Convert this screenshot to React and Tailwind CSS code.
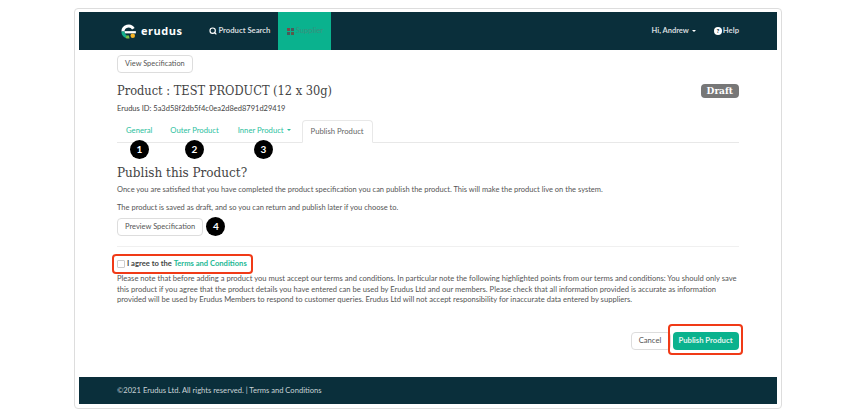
import React from 'react';
import { Search } from 'lucide-react';

const Step = ({ n, className = '' }) => (
  <span className={`flex h-[19px] w-[19px] items-center justify-center rounded-full bg-black text-[10px] font-bold text-white ${className}`}>
    {n}
  </span>
);

const Caret = ({ className = '' }) => (
  <span className={`inline-block border-x-[2.5px] border-t-[2.5px] border-x-transparent ${className}`} />
);

const Logo = () => (
  <svg width="17" height="17" viewBox="0 0 18 18" className="mr-[4px]">
    <path d="M1.5 9a7.5 7.5 0 0 1 14-3.7l-2.7 1.5A4.4 4.4 0 0 0 4.7 9z" fill="#fff" />
    <path d="M4.7 8.6h12.1V11H4.7z" fill="#fff" />
    <path d="M1.5 9h3.2a4.4 4.4 0 0 0 2.4 3.9l-1.3 2.9A7.5 7.5 0 0 1 1.5 9z" fill="#14b08c" />
    <path d="M5.8 15.8l1.3-2.9c.8.4 1.6.5 2.4.4l.6 3.1a7.5 7.5 0 0 1-4.3-.6z" fill="#7cc242" />
    <circle cx="13.5" cy="13.6" r="2.4" fill="#f5b324" />
  </svg>
);

const App = () => {
  return (
    <div className="h-[412px] w-[858px] overflow-hidden bg-white pl-[74px] pt-2 font-['Lato',sans-serif] text-[#555]">
      <div className="flex h-[401px] w-[708px] flex-col rounded border border-[#ddd] px-1 pb-1 pt-[3px]">
        {/* Nav */}
        <div className="flex h-[38px] shrink-0 items-center bg-[#0a2f3b] pl-[41px] pr-[38px] text-[7.7px] text-[#d5dcdf]">
          <Logo />
          <span className="font-['Open_Sans',sans-serif] text-[11px] font-bold tracking-[0.5px] text-white">erudus</span>
          <span className="ml-[27px] flex items-center gap-[1px] font-bold">
            <Search size={8} strokeWidth={3.5} className="text-white" />
            Product Search
          </span>
          <span className="ml-2 flex h-full w-[53px] items-center justify-center gap-[2px] bg-[#0ab28e] text-[#3a8f7d]">
            <span className="grid h-[7px] w-[7px] grid-cols-2 gap-px">
              <span className="bg-[#7a4a4a]" />
              <span className="bg-[#4a5a5a]" />
              <span className="bg-[#4a5a5a]" />
              <span className="bg-[#5a5a4a]" />
            </span>
            Supplier
          </span>
          <span className="ml-auto flex items-center gap-[3px] text-[7.5px] font-bold">
            Hi, Andrew <Caret className="border-t-white" />
          </span>
          <span className="ml-[18px] flex items-center gap-[1px] font-bold">
            <span className="flex h-[8px] w-[8px] items-center justify-center rounded-full bg-white text-[6px] font-black leading-none text-[#0a2f3b]">?</span>
            Help
          </span>
        </div>

        {/* Content */}
        <div className="flex flex-1 flex-col px-[38px]">
          <div className="mt-[5px] flex">
            <button className="h-[18px] rounded-sm border border-[#ddd] bg-white px-[7px] text-[7.4px] leading-none text-[#555]">View Specification</button>
          </div>
          <div className="mt-[7px] flex items-start justify-between">
            <h1 className="font-['DejaVu_Serif',serif] text-[12.7px] font-stretch-condensed leading-[22px] text-[#444]">Product : TEST PRODUCT (12 x 30g)</h1>
            <span className="mt-[4px] rounded-sm bg-[#777] px-[6px] py-[1px] font-['DejaVu_Serif',serif] text-[9px] font-bold leading-[12px] text-white">Draft</span>
          </div>
          <p className="mt-[2px] text-[7.5px] leading-[10px] text-[#444]">Erudus ID: 5a3d58f2db5f4c0ea2d8ed8791d29419</p>

          {/* Tabs */}
          <div className="mt-[6px] flex h-[23px] items-end border-b border-[#e8e8e8] text-[7.7px] text-[#2cc09e]">
            <span className="ml-[9px] h-[19px] leading-[14px]">General</span>
            <span className="ml-[18px] h-[19px] leading-[14px]">Outer Product</span>
            <span className="ml-[19px] flex h-[19px] items-start gap-[3px] leading-[14px]">
              Inner Product <Caret className="mt-[6px] border-t-[#2cc09e]" />
            </span>
            <span className="relative top-px ml-[11px] h-[23px] rounded-t-sm border border-b-white border-[#e8e8e8] bg-white px-2 leading-[20px] text-[#666]">Publish Product</span>
          </div>
          <div className="relative -mt-[3px] flex h-[19px]">
            <Step n={1} className="ml-[13px]" />
            <Step n={2} className="ml-[36px]" />
            <Step n={3} className="ml-[50px]" />
          </div>

          <h2 className="mt-[4px] font-['DejaVu_Serif',serif] text-[13.4px] font-stretch-condensed leading-[20px] text-[#444]">Publish this Product?</h2>
          <p className="mt-[1px] text-[7.5px] leading-[11px]">Once you are satisfied that you have completed the product specification you can publish the product. This will make the product live on the system.</p>
          <p className="mt-[7px] text-[7.5px] leading-[11px]">The product is saved as draft, and so you can return and publish later if you choose to.</p>
          <div className="mt-[4px] flex items-center">
            <button className="h-[18px] rounded-sm border border-[#ddd] bg-white px-[7px] text-[7.5px] leading-none text-[#555]">Preview Specification</button>
            <Step n={4} className="ml-[3px]" />
          </div>
          <div className="mt-[10px] border-t border-[#f0f0f0]" />

          {/* Terms */}
          <div className="-ml-[5px] mt-[7px] flex h-[20px] w-[141px] items-center rounded-sm border-2 border-[#f03a17] pl-[3px] text-[7.6px] font-bold text-[#444]">
            <span className="mr-[2px] h-2 w-2 rounded-[1px] border border-[#ccc] bg-white" />
            I agree to the&nbsp;<span className="text-[#1db894]">Terms and Conditions</span>
          </div>
          <p className="mt-[-1px] text-[7.6px] leading-[10.7px] text-[#555]">
            Please note that before adding a product you must accept our terms and conditions. In particular note the following highlighted points from our terms and conditions: You should only save this product if you agree that the product details you have entered can be used by Erudus Ltd and our members. Please check that all information provided is accurate as information provided will be used by Erudus Members to respond to customer queries. Erudus Ltd will not accept responsibility for inaccurate data entered by suppliers.
          </p>

          {/* Actions */}
          <div className="mt-[19px] flex items-start justify-end">
            <button className="mt-[8px] h-[18px] w-[40px] rounded-sm border border-[#ddd] bg-white pr-[2px] text-[7.7px] leading-none text-[#555]">Cancel</button>
            <div className="relative -ml-[3px] -mr-[4px] flex h-[31px] w-[75px] items-start justify-center rounded-sm border-2 border-[#f03a17] pt-[6px]">
              <button className="h-[18px] w-[66px] rounded-sm bg-[#0ab28e] text-[7.7px] font-bold leading-none text-[#e4f6f1]">Publish Product</button>
            </div>
          </div>
        </div>

        {/* Footer */}
        <div className="flex h-[27px] shrink-0 items-center bg-[#0a2f3b] pl-[38px] text-[7.6px] text-[#c9d3d6]">
          ©2021 Erudus Ltd. All rights reserved. | Terms and Conditions
        </div>
      </div>
    </div>
  );
};

export default App;
